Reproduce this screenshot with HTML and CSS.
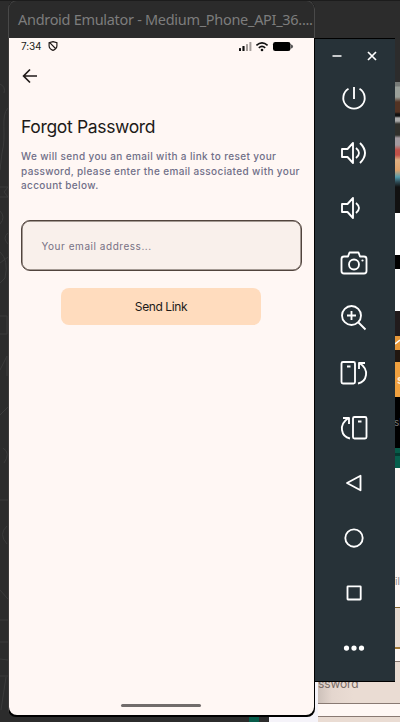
FILE: index.html
```html
<!DOCTYPE html>
<html lang="en">
<head>
<meta charset="utf-8">
<title>Android Emulator</title>
<link rel="stylesheet" href="styles.css">
</head>
<body>
<div class="desktop">
  <svg class="wallpaper" width="9" height="722" viewBox="0 0 9 722"><g fill="none" stroke="#3b3b3b"><path d="M0 84q6 3 4 9M8 108C0 116 7 135 2 153l-2 17M0 187h8l-4 5 4 5H0M0 211q6 6 0 13M8 233q-6 5 0 11M0 252q9 8 5 26l-5 5M0 263l8-6M0 316h7v18H0M0 370l7-14v20M0 415l8-8M3 448q8 5 1 15M0 500h8M7 526q-9 8 0 18M0 590l8 9M0 620h8M0 642h8M0 659l8 1M0 676h8M6 677L1 710"/></g></svg>
  <div class="edge">
    <div class="edge-top"></div>
    <div class="photo"></div>
    <div class="white-a"></div>
    <div class="black-a"></div>
    <div class="white-b"></div>
    <div class="dark-a"></div>
    <div class="tick"><svg width="5" height="14" viewBox="0 0 5 14"><path d="M0 8l5-4" stroke="#fff" stroke-width="1.5"/></svg></div>
    <div class="dark-b"></div>
    <div class="orange">s</div>
    <div class="black-b">sl</div>
    <div class="green"></div>
    <div class="page"><span>il</span></div>
    <div class="field gold"></div>
    <div class="gap"></div>
  </div>
  <div class="lower">
    <div class="lower-dark"><i></i></div>
    <div class="lower-phone"><i></i></div>
    <div class="lower-form"><div class="pw">ssword</div><div class="strip"></div><div class="next"></div></div>
  </div>

  <main class="window">
    <header class="titlebar">Android Emulator - Medium_Phone_API_36....</header>
    <section class="screen">
      <div class="status">
        <span class="time">7:34</span>
        <svg class="shield" width="10" height="10" viewBox="0 0 10 10" fill="none" stroke="#211a18" stroke-width="1.2"><path d="M5 .6L8.9 1.8V4.8Q8.9 8 5 9.4Q1.1 8 1.1 4.8V1.8ZM2 1.8L8 8"/></svg>
        <svg class="signals" width="56" height="11" viewBox="0 0 56 11"><g fill="#111"><rect x="1" y="7" width="2" height="3" rx=".6"/><rect x="4.4" y="5" width="2.2" height="5" rx=".6"/></g><g fill="#a39c99"><rect x="8" y="3" width="2" height="7" rx=".6"/><rect x="11.400" y="1" width="2" height="9" rx=".6"/></g><g fill="none" stroke="#111" stroke-width="1.7"><path d="M18.400 4.300Q24 -.5 29.600 4.300M20.800 6.800Q24 4 27.200 6.800"/></g><circle cx="24" cy="9" r="1.300" fill="#111"/><rect x="35" y="1" width="17.500" height="9" rx="2.300" fill="#000"/><path d="M53 3.500q2 0 2 2t-2 2z" fill="#555"/></svg>
      </div>
      <svg class="back" width="16" height="16" viewBox="0 0 16 16" fill="none" stroke="#211a18" stroke-width="1.7"><path d="M15 8H2M8 1.500L1.600 8L8 14.500"/></svg>
      <h1>Forgot Password</h1>
      <p class="copy">We will send you an email with a link to reset your<br>password, please enter the email associated with your<br>account below.</p>
      <div class="email">Your email address...</div>
      <div class="send">Send Link</div>
      <div class="handle"></div>
    </section>
  </main>

  <aside class="toolbar">
    <div class="controls">
      <svg width="10" height="10" viewBox="0 0 10 10"><path d="M.5 5h9" stroke="#fff" stroke-width="1.500"/></svg>
      <svg width="10" height="10" viewBox="0 0 10 10"><path d="M1 1l8 8M9 1l-8 8" stroke="#fff" stroke-width="1.700"/></svg>
    </div>
    <div class="tools">
      <svg viewBox="0 0 28 28"><path d="M8.500 4.800A10.700 10.700 0 1 0 19.500 4.800M14 3v12"/></svg>
      <svg viewBox="0 0 28 28"><path d="M2 10h5.500L13 4v20L7.500 18H2ZM16 9Q22 14 16 19M20 4Q30 14 20 24"/></svg>
      <svg viewBox="0 0 28 28"><path d="M2 10h5.500L13 4v20L7.500 18H2ZM16 9Q22 14 16 19"/></svg>
      <svg viewBox="0 0 28 28"><path d="M4 7.500h4l1.500-4h9l1.500 4h4q2.500 0 2.500 2.500v12q0 2.500-2.500 2.500H4q-2.500 0-2.500-2.500V10Q1.500 7.500 4 7.500Z"/><circle cx="14" cy="15.500" r="5"/><circle class="dot" cx="22.500" cy="11.500" r="1.100"/></svg>
      <svg viewBox="0 0 28 28"><circle cx="11.500" cy="11.500" r="9.500"/><path d="M18.500 18.500L25.500 25.500M7 11.500h9M11.500 7v9"/></svg>
      <svg viewBox="0 0 28 28"><rect x="1.500" y="3" width="13.500" height="21.500" rx="1.500"/><path d="M7 7.500h3.500M25 4h-6v6M19.500 4q7.500 5 6.500 12q-1 7-8 8.500"/></svg>
      <svg viewBox="0 0 28 28"><rect x="13" y="3" width="13.500" height="21.500" rx="1.500"/><path d="M18 7.500h3.500M3 4h6v6M8.500 4q-7.500 5-6.500 12q1 7 8 8.500"/></svg>
      <svg viewBox="0 0 28 28"><path d="M7 14L20.500 6.800V21.200Z"/></svg>
      <svg viewBox="0 0 28 28"><circle cx="14" cy="14" r="8.700"/></svg>
      <svg viewBox="0 0 28 28"><rect x="7.500" y="7.300" width="13.200" height="13.200" rx=".5"/></svg>
      <svg viewBox="0 0 28 28"><g class="solid"><circle cx="6.500" cy="14" r="1.700"/><circle cx="14" cy="14" r="1.700"/><circle cx="21.500" cy="14" r="1.700"/></g></svg>
    </div>
  </aside>
</div>
</body>
</html>
```

FILE: styles.css
```css
* { box-sizing: border-box; }
body { margin: 0; }
svg { display: block; }
.desktop { position: relative; width: 400px; height: 722px; overflow: hidden; background: #2c2c2c; border-top: 1px solid #1c1c1c; font-family: Inter, sans-serif; }
.wallpaper { position: absolute; left: 0; top: -1px; }
.edge { position: absolute; left: 395px; top: -1px; width: 5px; height: 722px; overflow: hidden; display: flex; flex-direction: column; background: #fff8f5; }
.edge > div { flex-shrink: 0; }
.edge-top { height: 82px; background: #2c2c2c; border-top: 1px solid #1c1c1c; }
.photo { height: 131px; background: linear-gradient(#777b78 0 4px, #9aa09a 5px 15px, #533323 20px 30px, #101010 32px 34px, #aaa 36px 39px, #30302c 42px 53px, #a39aa0 56px 63px, #c15149 68px 73px, #dfb184 78px, #e0a36c 88px, #549dad 95px, #2e4a54 100px, #111 105px); }
.white-a { height: 42px; background: #fff; }
.black-a { height: 14px; background: #000; }
.white-b { height: 42px; background: #fff; }
.dark-a { height: 25px; background: #211b1c; }
.tick { height: 14px; background: #e79839; }
.dark-b { height: 12px; background: #211710; }
.orange { height: 35px; padding-left: 2px; background: #f0a13f; color: #ffedcf; font: 700 12px/35px Inter, sans-serif; }
.black-b { height: 51px; margin-left: -1px; background: #000; color: #777; font: 10px/51px Inter, sans-serif; }
.green { height: 20px; background: linear-gradient(#075c49 0 5px, #043b31 5px 8px, #07604d 8px); }
.page { height: 139px; padding-top: 106px; color: #938b8c; font: 10px/14px Inter, sans-serif; }
.page span { display: block; white-space: nowrap; }
.field { height: 42px; background: #eadcd3; }
.gold { border-top: 1px solid #8c6b35; border-bottom: 2px solid #a77e3b; }
.gap { height: 12px; }
.lower { position: absolute; left: 0; top: 660px; width: 400px; height: 61px; display: flex; }
.lower-dark { width: 269px; padding: 50px 0 0 249px; }
.lower-dark i { display: block; width: 10px; height: 11px; background: #075b49; }
.lower-phone { width: 49px; padding-right: 4px; background: #f5f3f9; }
.lower-phone i { display: block; height: 55px; border: solid #b4adb1; border-width: 0 1px 1px 0; border-radius: 0 0 9px 0; }
.lower-form { width: 82px; background: #fff8f5; }
.pw { height: 43px; padding-top: 15px; background: linear-gradient(90deg, #cdc1ba, #e4d6ce 14px, #eadcd3 35px); border-top: 1px solid #897a73; border-bottom: 1px solid #897a73; color: #786b65; font: 12px/13px Inter, sans-serif; letter-spacing: -.1px; }
.strip { height: 12px; }
.next { height: 7px; background: #eadcd3; border-top: 1px solid #897a73; }
.window { position: absolute; left: 8px; top: -1px; width: 307px; height: 717px; background: linear-gradient(90deg, #3c3a39 0 1px, #000 1px); border-radius: 9px 9px 8px 8px; overflow: hidden; }
.titlebar { height: 38px; padding-left: 9px; background: #2b2b2b; border: 1px solid #494949; border-bottom: 0; border-radius: 9px 9px 0 0; color: #7d7d7d; font: 14.500px/37px "Noto Sans", sans-serif; letter-spacing: -.3px; white-space: nowrap; }
.screen { height: 677px; width: 305px; margin-left: 1px; padding: 0 12px; background: #fff7f4; border-radius: 0 0 8px 8px; display: flex; flex-direction: column; }
.status { height: 16px; display: flex; align-items: center; color: #211a18; font-size: 10px; }
.time { width: 27px; letter-spacing: -.15px; }
.signals { margin-left: auto; margin-right: 8px; }
.back { margin: 14px 0 0 .5px; }
h1 { margin: 31px 0 0; height: 24px; color: #211a18; font: 400 17.500px/24px Inter, sans-serif; letter-spacing: -.34px; white-space: nowrap; }
.copy { margin: 10px 0 0; color: #706f88; font: 500 10px/14.700px Inter, sans-serif; letter-spacing: .37px; white-space: nowrap; }
.email { margin-top: 26.400px; height: 51px; padding-left: 19.500px; width: 281px; border: 1px solid #51443d; box-shadow: inset 0 0 0 .5px #51443d; border-radius: 9px; background: #f9f0eb; color: #777184; font: 10px/50px Inter, sans-serif; letter-spacing: .54px; }
.send { width: 200px; height: 37px; margin: 17.600px 0 0 40px; border-radius: 8px; background: #ffdcbe; color: #211a18; font: 12px/37px Inter, sans-serif; letter-spacing: -.4px; text-align: center; }
.handle { width: 80px; height: 3px; margin: auto 0 8px 100px; border-radius: 2px; background: #716c6b; }
.toolbar { position: absolute; left: 314px; top: 37px; width: 81px; height: 644px; background: #273238; border: 1px solid #000; border-right: 0; }
.controls { display: flex; justify-content: space-between; padding: 12px 18px 0 17px; }
.tools { display: flex; flex-direction: column; align-items: center; gap: 27px; margin-top: 23px; padding-right: 2px; }
.tools svg { width: 28px; height: 28px; fill: none; stroke: #fff; stroke-width: 1.850; stroke-linejoin: round; }
.tools .solid { fill: #fff; }
.tools .dot { fill: #fff; stroke: none; }
```
